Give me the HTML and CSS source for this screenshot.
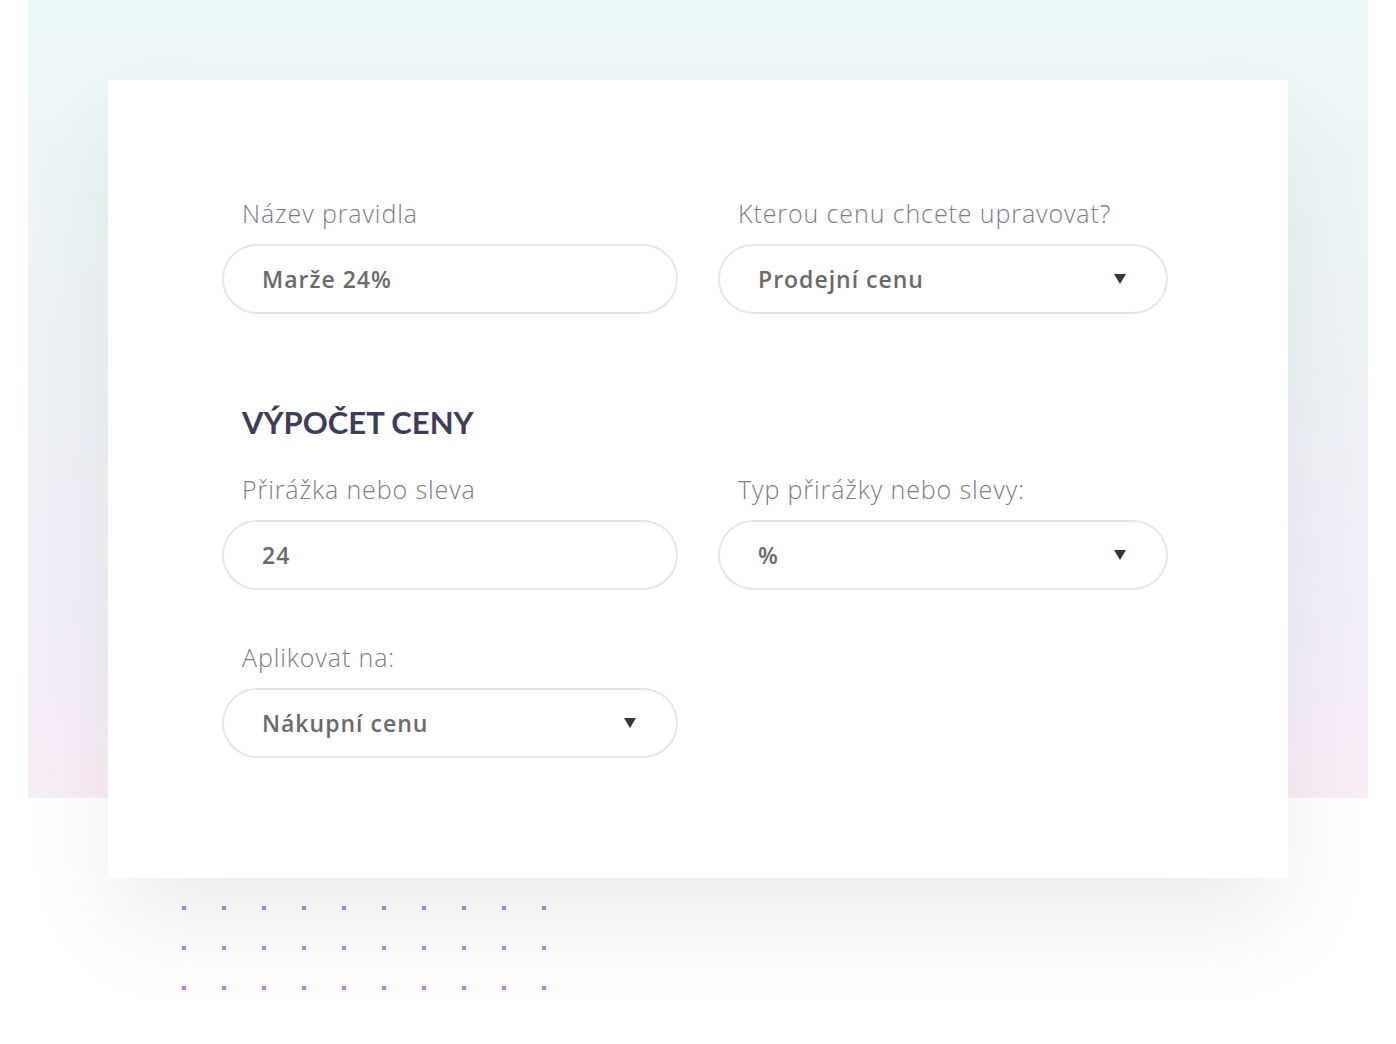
FILE: index.html
```html
<!DOCTYPE html>
<html>
  <head>
    <title>Pravidlo ceny</title>
    <link rel="stylesheet" href="styles.css">
  </head>

  <body>
    <div class="page">
      <div class="card">
        <div class="row">
          <div class="field">
            <label class="label">Název pravidla</label>
            <div class="input">Marže 24%</div>
          </div>
          <div class="field">
            <label class="label">Kterou cenu chcete upravovat?</label>
            <div class="input select">Prodejní cenu <span class="arrow"></span></div>
          </div>
        </div>

        <h2 class="section">VÝPOČET CENY</h2>

        <div class="row">
          <div class="field">
            <label class="label">Přirážka nebo sleva</label>
            <div class="input">24</div>
          </div>
          <div class="field">
            <label class="label">Typ přirážky nebo slevy:</label>
            <div class="input select">% <span class="arrow"></span></div>
          </div>
        </div>

        <div class="row last">
          <div class="field">
            <label class="label">Aplikovat na:</label>
            <div class="input select">Nákupní cenu <span class="arrow"></span></div>
          </div>
        </div>
      </div>

      <!-- decorative dots under the card -->
      <div class="dots">
        <span></span><span></span><span></span><span></span><span></span><span></span><span></span><span></span><span></span><span></span>
        <span></span><span></span><span></span><span></span><span></span><span></span><span></span><span></span><span></span><span></span>
        <span></span><span></span><span></span><span></span><span></span><span></span><span></span><span></span><span></span><span></span>
      </div>
    </div>
  </body>
</html>
```

FILE: styles.css
```css
body {
  font-family: "Open Sans", Lato, sans-serif;
  background-color: #fff;
  margin: 0;
  padding: 0;
}

.page {
  min-height: 1044px;
  box-sizing: border-box;
  padding: 80px 108px 0;
  background: linear-gradient(180deg, #ecf8f7 0%, #edf2f5 45%, #f3eef8 80%, #f9edf7 100%) 28px 0 / 1340px 798px no-repeat;
}

.card {
  position: relative;
  height: 798px;
  box-sizing: border-box;
  background-color: #fff;
  padding: 113px 0 0 114px;
  box-shadow: 0 50px 90px -10px rgba(60, 90, 90, 0.11);
}

.row {
  display: grid;
  grid-template-columns: 456px 450px;
  column-gap: 40px;
}

.field {
  display: flex;
  flex-direction: column;
}

.label {
  padding-left: 20px;
  font-size: 25px;
  font-weight: 300;
  letter-spacing: 0.9px;
  color: #7d7a8e;
  line-height: 40px;
  margin-bottom: 11px;
}

.input {
  height: 70px;
  box-sizing: border-box;
  border: 2px solid #e6e6e6;
  border-radius: 35px;
  padding: 0 40px 0 38px;
  display: flex;
  align-items: center;
  font-size: 23px;
  font-weight: 600;
  letter-spacing: 1px;
  color: #6a6a6a;
}

.select {
  justify-content: space-between;
}

.arrow {
  width: 0;
  height: 0;
  border-left: 6px solid transparent;
  border-right: 6px solid transparent;
  border-top: 10px solid #2f393d;
}

.section {
  margin: 88px 0 27px 20px;
  font-family: Lato, sans-serif;
  font-size: 31px;
  font-weight: 700;
  color: #3d3c5b;
  line-height: 40px;
}

.last {
  margin-top: 47px;
}

.dots {
  margin: 28px 0 0 74px;
  width: 400px;
  display: grid;
  grid-template-columns: repeat(10, 40px);
  grid-auto-rows: 40px;
}

.dots span {
  width: 4px;
  height: 4px;
  background-color: #b07ef0;
}
```
